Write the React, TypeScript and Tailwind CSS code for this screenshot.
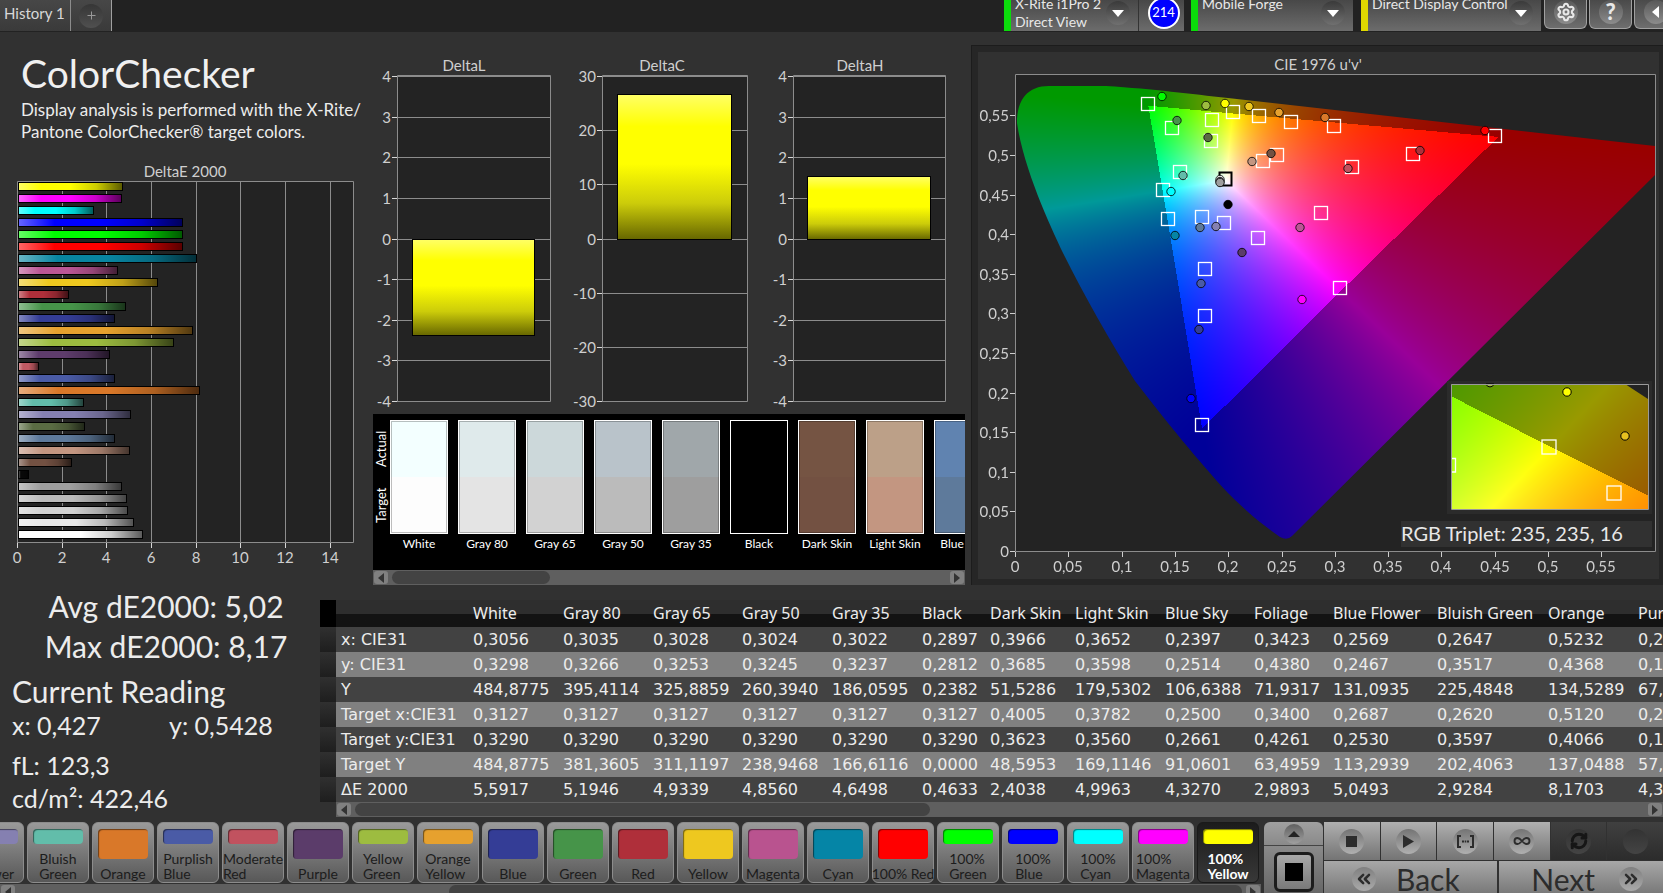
import { useEffect, useRef } from "react";
import type { ReactNode } from "react";
import { ChevronsLeft, ChevronsRight, Infinity as InfinityIcon, RefreshCw, Settings } from "lucide-react";
import clsx from "clsx";

type Patch = { name: string; color: string; dE: number };

// chart order, top to bottom
const deltaE: Patch[] = [
  { name: "100% Yellow", color: "#ffff00", dE: 4.69 },
  { name: "100% Magenta", color: "#ff00ff", dE: 4.64 },
  { name: "100% Cyan", color: "#00ffff", dE: 3.4 },
  { name: "100% Blue", color: "#0000ff", dE: 7.38 },
  { name: "100% Green", color: "#00ff00", dE: 7.38 },
  { name: "100% Red", color: "#ff0000", dE: 7.38 },
  { name: "Cyan", color: "#0885a1", dE: 8.0 },
  { name: "Magenta", color: "#bb5695", dE: 4.47 },
  { name: "Yellow", color: "#eec81f", dE: 6.26 },
  { name: "Red", color: "#af2f3a", dE: 2.23 },
  { name: "Green", color: "#469449", dE: 4.83 },
  { name: "Blue", color: "#343d96", dE: 4.34 },
  { name: "Orange Yellow", color: "#e6a12e", dE: 7.83 },
  { name: "Yellow Green", color: "#9dbc40", dE: 6.98 },
  { name: "Purple", color: "#5e3c6c", dE: 4.12 },
  { name: "Moderate Red", color: "#c15a63", dE: 0.89 },
  { name: "Purplish Blue", color: "#4a5ba6", dE: 4.34 },
  { name: "Orange", color: "#d97829", dE: 8.17 },
  { name: "Bluish Green", color: "#62bdaa", dE: 2.93 },
  { name: "Blue Flower", color: "#8580b1", dE: 5.05 },
  { name: "Foliage", color: "#5a6c43", dE: 2.99 },
  { name: "Blue Sky", color: "#5e7a9b", dE: 4.33 },
  { name: "Light Skin", color: "#c39681", dE: 5.0 },
  { name: "Dark Skin", color: "#735142", dE: 2.4 },
  { name: "Black", color: "#080808", dE: 0.46 },
  { name: "Gray 35", color: "#9e9e9e", dE: 4.65 },
  { name: "Gray 50", color: "#bbbbbb", dE: 4.86 },
  { name: "Gray 65", color: "#d2d2d2", dE: 4.93 },
  { name: "Gray 80", color: "#e8e8e8", dE: 5.19 },
  { name: "White", color: "#ffffff", dE: 5.59 }
];

const swatches = [
  { name: "White", actual: "#f3ffff", target: "#fdfdfd" },
  { name: "Gray 80", actual: "#dfeaeb", target: "#e4e4e4" },
  { name: "Gray 65", actual: "#ccd8da", target: "#d2d2d2" },
  { name: "Gray 50", actual: "#b9c3ca", target: "#bbbbbb" },
  { name: "Gray 35", actual: "#a0a7aa", target: "#9e9e9e" },
  { name: "Black", actual: "#000000", target: "#000000" },
  { name: "Dark Skin", actual: "#755443", target: "#735142" },
  { name: "Light Skin", actual: "#bca088", target: "#c39681" },
  { name: "Blue Sky", actual: "#6083b0", target: "#5e7a9b" }
];

const columns = ["White", "Gray 80", "Gray 65", "Gray 50", "Gray 35", "Black", "Dark Skin", "Light Skin", "Blue Sky", "Foliage", "Blue Flower", "Bluish Green", "Orange", "Purplish Blue"];
const columnWidths = [16, 132, 90, 90, 89, 90, 90, 68, 85, 90, 89, 79, 104, 111, 90, 120];

const rows: [string, string[]][] = [
  ["x: CIE31", ["0,3056", "0,3035", "0,3028", "0,3024", "0,3022", "0,2897", "0,3966", "0,3652", "0,2397", "0,3423", "0,2569", "0,2647", "0,5232", "0,2"]],
  ["y: CIE31", ["0,3298", "0,3266", "0,3253", "0,3245", "0,3237", "0,2812", "0,3685", "0,3598", "0,2514", "0,4380", "0,2467", "0,3517", "0,4368", "0,1"]],
  ["Y", ["484,8775", "395,4114", "325,8859", "260,3940", "186,0595", "0,2382", "51,5286", "179,5302", "106,6388", "71,9317", "131,0935", "225,4848", "134,5289", "67,"]],
  ["Target x:CIE31", ["0,3127", "0,3127", "0,3127", "0,3127", "0,3127", "0,3127", "0,4005", "0,3782", "0,2500", "0,3400", "0,2687", "0,2620", "0,5120", "0,2"]],
  ["Target y:CIE31", ["0,3290", "0,3290", "0,3290", "0,3290", "0,3290", "0,3290", "0,3623", "0,3560", "0,2661", "0,4261", "0,2530", "0,3597", "0,4066", "0,1"]],
  ["Target Y", ["484,8775", "381,3605", "311,1197", "238,9468", "166,6116", "0,0000", "48,5953", "169,1146", "91,0601", "63,4959", "113,2939", "202,4063", "137,0488", "57,"]],
  ["ΔE 2000", ["5,5917", "5,1946", "4,9339", "4,8560", "4,6498", "0,4633", "2,4038", "4,9963", "4,3270", "2,9893", "5,0493", "2,9284", "8,1703", "4,3"]]
];

const patchButtons: { lines: string[]; color: string }[] = [
  { lines: ["Blue", "Flower"], color: "#8580b1" },
  { lines: ["Bluish", "Green"], color: "#62bdaa" },
  { lines: ["Orange"], color: "#d97829" },
  { lines: ["Purplish", "Blue"], color: "#4a5ba6" },
  { lines: ["Moderate", "Red"], color: "#c1525f" },
  { lines: ["Purple"], color: "#5b3c6a" },
  { lines: ["Yellow", "Green"], color: "#9dbc40" },
  { lines: ["Orange", "Yellow"], color: "#e6a12e" },
  { lines: ["Blue"], color: "#343d96" },
  { lines: ["Green"], color: "#469449" },
  { lines: ["Red"], color: "#af2f3a" },
  { lines: ["Yellow"], color: "#eec81f" },
  { lines: ["Magenta"], color: "#b9538f" },
  { lines: ["Cyan"], color: "#0585a6" },
  { lines: ["100% Red"], color: "#ff0000" },
  { lines: ["100%", "Green"], color: "#00ff00" },
  { lines: ["100%", "Blue"], color: "#0000ff" },
  { lines: ["100%", "Cyan"], color: "#00ffff" },
  { lines: ["100%", "Magenta"], color: "#ff00ff" },
  { lines: ["100%", "Yellow"], color: "#ffff00" }
];

// centres inside the 640x476 CIE plot
const targets = [
  [133, 29], [157, 53], [197, 45], [218, 37], [244, 41], [276, 47], [319, 51], [196, 66], [262, 80],
  [248, 86], [337, 92], [398, 79], [480, 61], [165, 97], [148, 115], [153, 144], [187, 142], [209, 148],
  [243, 163], [306, 138], [190, 194], [190, 241], [325, 213], [187, 350]
];

const readings: [number, number, string][] = [
  [147, 21, "#00ff00"], [162, 45, "#469449"], [191, 30, "#9dbc40"], [210, 28, "#ffff00"], [234, 31, "#eec81f"],
  [264, 37, "#e6a12e"], [310, 42, "#d97829"], [193, 62, "#5a6c43"], [237, 86, "#c39681"], [256, 78, "#735142"],
  [333, 93, "#c1525f"], [405, 75, "#af2f3a"], [470, 55, "#ff0000"], [168, 100, "#62bdaa"], [156, 116, "#00ffff"],
  [205, 104, "#f0f0f0"], [205, 106, "#bbbbbb"], [205, 107, "#9e9e9e"], [213, 129, "#000000"], [185, 152, "#5e7a9b"],
  [201, 151, "#8580b1"], [160, 160, "#0585a6"], [227, 177, "#5b3c6a"], [285, 152, "#bb5695"], [186, 208, "#4a5ba6"],
  [287, 224, "#ff00ff"], [184, 254, "#343d96"], [176, 323, "#0000ff"]
];

const LOCUS =
  "M2 48 C2 24 13 11 34 11 L91 11 C140 14 175 19 213 23 L640 71 L640 100 L277 461 Q272 466 265 462 C245 448 230 435 213 418 C185 388 150 345 120 306 C95 266 70 222 48 178 C35 150 9 95 2 48 Z";
const INSET_AREA = "M0 0 L174 0 L197 15 L197 125 L0 125 Z";

type ToXy = (px: number, py: number) => [number, number];

const mainToXy: ToXy = (px, py) => {
  const u = px / 1064.8;
  const v = (476 - py) / 792;
  const d = 6 * u - 16 * v + 12;
  return [(9 * u) / d, (4 * v) / d];
};

const insetToXy: ToXy = (px, py) => [0.4193 + (px - 98) / 2300, 0.5053 - (py - 63) / 1467];

function GamutCanvas({ width, height, toXy, area }: { width: number; height: number; toXy: ToXy; area: string }) {
  const ref = useRef<HTMLCanvasElement>(null);

  useEffect(() => {
    const ctx = ref.current?.getContext("2d");
    if (!ctx) return;
    const image = ctx.createImageData(width, height);
    for (let py = 0; py < height; py++) {
      for (let px = 0; px < width; px++) {
        const [x, y] = toXy(px, py);
        const yy = Math.max(y, 0.0001);
        const X = x / yy;
        const Z = (1 - x - y) / yy;
        const rgb = [
          3.2406 * X - 1.5372 - 0.4986 * Z,
          -0.9689 * X + 1.8758 + 0.0415 * Z,
          0.0557 * X - 0.204 + 1.057 * Z
        ];
        const max = Math.max(...rgb);
        // outside Rec.709 the fill is dimmed
        const gain = Math.min(...rgb) / max < -0.002 ? 0.6 : 1;
        const i = (py * width + px) * 4;
        rgb.forEach((c, k) => {
          image.data[i + k] = 255 * gain * Math.max(0, c / max);
        });
        image.data[i + 3] = 255;
      }
    }
    ctx.putImageData(image, 0, 0);
    ctx.globalCompositeOperation = "destination-in";
    ctx.fill(new Path2D(area));
    ctx.globalCompositeOperation = "source-over";
  }, [width, height, toXy, area]);

  return <canvas ref={ref} width={width} height={height} className="block" />;
}

function DeltaEChart() {
  return (
    <svg viewBox="0 0 373 410" className="mt-4 block h-[410px] w-[373px]" role="img" aria-label="DeltaE 2000">
      <defs>
        <linearGradient id="shade-x">
          <stop offset="0" stopColor="#fff" stopOpacity="0.4" />
          <stop offset="0.22" stopColor="#fff" stopOpacity="0" />
          <stop offset="0.5" stopColor="#000" stopOpacity="0" />
          <stop offset="0.75" stopColor="#000" stopOpacity="0.2" />
          <stop offset="1" stopColor="#000" stopOpacity="0.65" />
        </linearGradient>
      </defs>
      <text x="185" y="18" textAnchor="middle" fontSize="15" fill="#cfcfcf">DeltaE 2000</text>
      <rect x="18" y="23" width="335" height="360" fill="#232323" />
      {[0, 2, 4, 6, 8, 10, 12, 14].map((n) => {
        const x = Math.round(18 + n * 22.33);
        return (
          <g key={n}>
            <rect x={x - 1} y="23" width="1" height="365" fill="#8c8c8c" />
            <rect x={x - 1} y="383" width="1" height="6" fill="#d8d8d8" />
            <text x={x - 1} y="404" textAnchor="middle" fontSize="15" fill="#cfcfcf">{n}</text>
          </g>
        );
      })}
      <path d="M17.5 22.5 H353.5 V383.5 H17.5 Z" fill="none" stroke="#8c8c8c" />
      {deltaE.map((p, i) => (
        <g key={p.name}>
          <rect x="18.5" y={23.5 + i * 12} width={Math.round(p.dE * 22.2)} height="8" fill={p.color} />
          <rect x="18.5" y={23.5 + i * 12} width={Math.round(p.dE * 22.2)} height="8" fill="url(#shade-x)" stroke="#000" />
        </g>
      ))}
    </svg>
  );
}

function DeltaChart({ title, width, left, right, labels, top, bottom, inset }: {
  title: string;
  width: number;
  left: number;
  right: number;
  labels: number[];
  top: number;
  bottom: number;
  inset: number;
}) {
  const step = 325 / (labels.length - 1);
  return (
    <svg width={width} height="382" viewBox={`0 0 ${width} 382`} className="block shrink-0" role="img" aria-label={title}>
      <defs>
        <linearGradient id={`shade-${title}`} x1="0" y1="0" x2="0" y2="1">
          <stop offset="0" stopColor="#ffff66" />
          <stop offset="0.22" stopColor="#ffff00" />
          <stop offset="0.48" stopColor="#ffff00" />
          <stop offset="0.75" stopColor="#cccc0a" />
          <stop offset="1" stopColor="#666600" />
        </linearGradient>
      </defs>
      <text x="91" y="39" textAnchor="middle" fontSize="15" fill="#cfcfcf">{title}</text>
      <rect x={left} y="44" width={right - left} height="325" fill="#232323" />
      {labels.map((n, i) => {
        const y = Math.round(44 + i * step);
        return (
          <g key={n}>
            <rect x={left} y={y} width={right - left} height="1" fill="#8c8c8c" />
            <rect x={left - 5} y={y} width="5" height="1" fill="#d8d8d8" />
            <text x={left - 6} y={y + 6} textAnchor="end" fontSize="15" fill="#cfcfcf">{n}</text>
          </g>
        );
      })}
      <path d={`M${left + 0.5} 43.5 H${right + 0.5} V369.5 H${left + 0.5} Z`} fill="none" stroke="#8c8c8c" />
      <rect x={left + inset + 0.5} y={top + 0.5} width={right - left - inset * 2 - 1} height={bottom - top} fill={`url(#shade-${title})`} stroke="#000" />
    </svg>
  );
}

function CieChart() {
  return (
    <svg viewBox="0 0 681 527" className="block w-full bg-[#313131]" role="img" aria-label="CIE 1976 u'v'">
      <text x="340" y="18" textAnchor="middle" fontSize="15" fill="#cfcfcf">CIE 1976 u'v'</text>
      <g transform="translate(37 23)">
        <rect y="-1" width="640" height="477" fill="#232323" />
        <foreignObject x="0" y="0" width="640" height="476">
          <GamutCanvas width={640} height={476} toXy={mainToXy} area={LOCUS} />
        </foreignObject>
        <path d="M0.5 -0.5 H640.5 V476.5 H0.5 Z" fill="none" stroke="#8c8c8c" />
        {["0", "0,05", "0,1", "0,15", "0,2", "0,25", "0,3", "0,35", "0,4", "0,45", "0,5", "0,55"].map((label, i) => {
          const x = Math.round(i * 53.3);
          const y = Math.round(476 - i * 39.6);
          return (
            <g key={label} fill="#cfcfcf" fontSize="15">
              <rect x={x} y="477" width="1" height="5" />
              <text x={x} y="497" textAnchor="middle">{label}</text>
              <rect x="-5" y={y} width="5" height="1" />
              <text x="-6" y={y + 6} textAnchor="end">{label}</text>
            </g>
          );
        })}
        {targets.map(([x, y]) => (
          <rect key={`${x}-${y}`} x={x - 6.5} y={y - 6.5} width="13" height="13" fill="none" stroke="#fff" strokeWidth="1.3" />
        ))}
        <rect x="204.5" y="97.5" width="12" height="13" fill="none" stroke="#000" strokeWidth="2" />
        {readings.map(([x, y, color]) => (
          <circle key={`${x}-${y}`} cx={x} cy={y + 0.5} r="4.2" fill={color} stroke="#000" strokeOpacity="0.8" />
        ))}

        <rect x="432" y="306" width="205" height="133" fill="#2b2b2b" />
        <g transform="translate(436 309)">
          <rect width="198" height="126" fill="#232323" />
          <foreignObject x="0" y="0" width="197" height="125">
            <GamutCanvas width={197} height={125} toXy={insetToXy} area={INSET_AREA} />
          </foreignObject>
          <g fill="none" stroke="#fff" strokeWidth="1.3">
            <rect x="91" y="56" width="14" height="14" />
            <rect x="156" y="102" width="14" height="14" />
            <path d="M0 74.5 H4.5 V88 H0" />
          </g>
          <path d="M35 0 A4.2 4.2 0 0 0 43 0 Z" fill="#9dbc40" stroke="#000" />
          <circle cx="116" cy="8" r="4.2" fill="#ffff00" stroke="#000" />
          <circle cx="174" cy="52" r="4.2" fill="#e6c020" stroke="#000" />
          <path d="M0.5 0.5 H197.5 V125.5 H0.5 Z" fill="none" stroke="#9a9a9a" />
        </g>
        <rect x="386" y="446" width="251" height="26" fill="#313131" />
        <text x="386" y="466" fontSize="20" fill="#e8e8e8">RGB Triplet: 235, 235, 16</text>
      </g>
    </svg>
  );
}

function ScrollBar({ lead, thumb, label }: { lead: string; thumb: string; label: string }) {
  return (
    <div className="flex h-[15px] w-full items-center justify-between bg-[#5f5f5f] px-px">
      <button aria-label={`Scroll ${label} left`} className="flex h-[13px] w-[14px] shrink-0 items-center justify-center rounded-[3px] bg-[#808080]">
        <svg width="6" height="10" viewBox="0 0 6 10"><path d="M6 0 L0 5 L6 10 Z" fill="#333" /></svg>
      </button>
      <div className="flex flex-1 px-1">
        <div className={lead} />
        <div className={clsx("h-[13px] rounded-full bg-[#434343]", thumb)} />
      </div>
      <button aria-label={`Scroll ${label} right`} className="flex h-[13px] w-[14px] shrink-0 items-center justify-center rounded-[3px] bg-[#808080]">
        <svg width="6" height="10" viewBox="0 0 6 10"><path d="M0 0 L6 5 L0 10 Z" fill="#333" /></svg>
      </button>
    </div>
  );
}

function DeviceMenu({ lines, bar, className }: { lines: string[]; bar: string; className: string }) {
  return (
    <button className={clsx("flex h-[31px] items-end overflow-hidden bg-linear-to-b from-[#484848] to-[#6c6c6c] text-left", className)}>
      <span className={clsx("h-full w-[7px] shrink-0", bar)} />
      <span className="flex-1 pl-1 text-[14px] leading-[18px] whitespace-nowrap text-[#e8e8e8]">
        <span className="block h-[18px]">{lines[0]}</span>
        <span className="block h-[18px]">{lines[1]}</span>
      </span>
      <span className="mr-2 mb-[6px] flex size-6 shrink-0 items-center justify-center rounded-full bg-linear-to-b from-[#3a3a3a] to-[#707070]">
        <svg width="12" height="7" viewBox="0 0 12 7"><path d="M0 0 H12 L6 7 Z" fill="#fff" /></svg>
      </span>
    </button>
  );
}

function ToolButton({ label, children }: { label: string; children: ReactNode }) {
  return (
    <button aria-label={label} className="flex h-[29px] w-[43px] items-start justify-center rounded-b-md border border-t-0 border-[#a0a0a0] bg-linear-to-b from-[#4a4a4a] to-[#6e6e6e]">
      <span className="flex size-6 items-center justify-center rounded-full bg-linear-to-b from-[#585858] to-[#8c8c8c] text-[#e8e8e8]">{children}</span>
    </button>
  );
}

function Header() {
  return (
    <header className="flex h-8 items-start justify-between overflow-hidden bg-[#222]">
      <div className="flex h-[31px]">
        <button className="w-[71px] border-r border-[#8c8c8c] bg-linear-to-b from-[#474747] to-[#3a3a3a] pb-1 pl-1 text-left text-[15px] whitespace-nowrap text-[#d8d8d8]">History 1</button>
        <button aria-label="Add history tab" className="flex w-[41px] items-center justify-center border-r border-[#a0a0a0] bg-linear-to-b from-[#474747] to-[#3a3a3a]">
          <span className="flex size-6 items-center justify-center rounded-full bg-linear-to-b from-[#363636] to-[#505050]">
            <svg width="9" height="9" viewBox="0 0 9 9"><path d="M4.5 0.5 V8.5 M0.5 4.5 H8.5" stroke="#999" /></svg>
          </span>
        </button>
      </div>
      <div className="flex">
        <DeviceMenu lines={["X-Rite i1Pro 2", "Direct View"]} bar="bg-[#0bdc0b]" className="w-[134px]" />
        <div className="mr-[7px] flex h-[31px] w-[46px] items-start justify-center border-l border-[#333] bg-linear-to-b from-[#484848] to-[#6c6c6c] pl-1">
          <span className="-mt-[3px] flex size-8 items-center justify-center rounded-full border-2 border-white bg-[#0000ff] text-[13px] text-white">214</span>
        </div>
        <DeviceMenu lines={["Mobile Forge", ""]} bar="bg-[#0bdc0b]" className="mr-2 w-[162px]" />
        <DeviceMenu lines={["Direct Display Control", ""]} bar="bg-[#e0d800]" className="mr-[3px] w-[180px]" />
        <div className="-mr-[14px] flex gap-[2px]">
          <ToolButton label="Settings"><Settings size={20} strokeWidth={2.5} /></ToolButton>
          <ToolButton label="Help"><span className="text-[22px] leading-6 font-black">?</span></ToolButton>
          <ToolButton label="Collapse">
            <svg width="7" height="12" viewBox="0 0 7 12"><path d="M7 0 L0 6 L7 12 Z" fill="#fff" /></svg>
          </ToolButton>
        </div>
      </div>
    </header>
  );
}

function SwatchStrip() {
  return (
    <div className="overflow-hidden bg-black">
      <div className="flex h-[156px] pt-[6px]">
        <div className="flex h-[114px] w-[17px] shrink-0 flex-col items-center text-[13px] leading-[17px] text-white">
          <span className="flex flex-1 rotate-180 items-center justify-center [writing-mode:vertical-rl]">Actual</span>
          <span className="flex flex-1 rotate-180 items-center justify-center [writing-mode:vertical-rl]">Target</span>
        </div>
        <div className="flex gap-[10px]">
          {swatches.map((s) => (
            <div key={s.name} className="w-[58px] shrink-0">
              <div className="h-[114px] border border-white">
                <div className="h-1/2 border border-b-0 border-black/25" style={{ backgroundColor: s.actual }} />
                <div className="h-1/2 border border-t-0 border-black/25" style={{ backgroundColor: s.target }} />
              </div>
              <p className="mt-[2px] text-center text-[12px] leading-4 whitespace-nowrap text-white">{s.name}</p>
            </div>
          ))}
        </div>
      </div>
      <ScrollBar label="swatches" lead="w-0" thumb="w-[158px]" />
    </div>
  );
}

function Readout() {
  return (
    <section className="w-[320px] shrink-0 pl-3 text-[30px] leading-10 text-[#ececec]">
      <p className="text-center">Avg dE2000: 5,02</p>
      <p className="text-center">Max dE2000: 8,17</p>
      <h2 className="mt-[5px]">Current Reading</h2>
      <div className="text-[25px] leading-7">
        <p className="flex"><span className="w-[157px]">x: 0,427</span><span>y: 0,5428</span></p>
        <p className="mt-3">fL: 123,3</p>
        <p className="mt-[5px]">cd/m²: 422,46</p>
      </div>
    </section>
  );
}

function DataTable() {
  return (
    <section className="mt-[14px] min-w-0 flex-1 overflow-hidden">
      <table className="w-[1433px] table-fixed border-collapse text-left text-[16px] whitespace-nowrap text-[#ececec]">
        <colgroup>
          {columnWidths.map((w, i) => <col key={i} style={{ width: w }} />)}
        </colgroup>
        <thead>
          <tr className="h-[27px] bg-linear-to-b from-[#2e2e2e] from-50% to-[#131313] to-50% font-['Noto_Sans',sans-serif]">
            <td className="bg-black" />
            <td />
            {columns.map((c) => <th key={c} scope="col" className="p-0 pb-[2px] pl-[5px] leading-5 font-normal">{c}</th>)}
          </tr>
        </thead>
        <tbody className="font-['DejaVu_Sans',sans-serif]">
          {rows.map(([label, values], i) => (
            <tr key={label} className={clsx("h-[25px]", i % 2 ? "bg-[#808080]" : "bg-[#424242]")}>
              <td className="bg-linear-to-b from-[#303030] to-[#1e1e1e]" />
              <th scope="row" className="p-0 pl-[5px] leading-5 font-normal">{label}</th>
              {values.map((v, k) => <td key={k} className="p-0 pl-[5px] leading-5">{v}</td>)}
            </tr>
          ))}
        </tbody>
      </table>
      <div className="pl-4">
        <ScrollBar label="table" lead="w-0" thumb="w-[575px]" />
      </div>
    </section>
  );
}

function PatchButton({ lines, color, active }: { lines: string[]; color: string; active: boolean }) {
  return (
    <button
      className={clsx(
        "flex h-[61px] w-[62px] shrink-0 flex-col items-center rounded-md border pt-[6px] text-[14px] leading-[15px]",
        active ? "border-[#1a1a1a] bg-linear-to-b from-[#1c1c1c] to-[#383838] font-bold text-white" : "border-[#8c8c8c] bg-linear-to-b from-[#9a9a9a] to-[#585858] text-[#1c1c1c]"
      )}
    >
      <span
        className={clsx("w-[50px] shrink-0 rounded-[4px] shadow-[inset_1px_1px_1px_rgba(0,0,0,0.5)]", lines.length > 1 ? "h-[15px]" : "h-[30px]")}
        style={{ backgroundColor: color }}
      />
      <span className="mt-[7px] text-left whitespace-nowrap">
        {lines.map((l) => <span key={l} className="block">{l}</span>)}
      </span>
    </button>
  );
}

function Transport({ label, dim, children }: { label: string; dim?: boolean; children?: ReactNode }) {
  return (
    <button aria-label={label} className={clsx("flex h-[38px] flex-1 items-center justify-center bg-linear-to-b", dim ? "from-[#404040] to-[#2c2c2c]" : "from-[#b0b0b0] to-[#747474]")}>
      <span className={clsx("flex size-[25px] items-center justify-center rounded-full bg-linear-to-b text-[#2c2c2c]", dim ? "from-[#333] to-[#444]" : "from-[#747474] to-[#b0b0b0]")}>{children}</span>
    </button>
  );
}

function Footer() {
  return (
    <footer className="flex h-[75px] overflow-hidden pt-1">
      <div className="min-w-0 flex-1">
        <div className="flex justify-end gap-[3px] overflow-hidden pr-[2px]">
          {patchButtons.map((p, i) => <PatchButton key={p.lines.join(" ")} {...p} active={i === patchButtons.length - 1} />)}
        </div>
        <div className="mt-px">
          <ScrollBar label="patches" lead="w-[430px]" thumb="flex-1" />
        </div>
      </div>
      <div className="ml-[3px] w-[59px] shrink-0">
        <button aria-label="Show patch list" className="flex h-6 w-full items-center justify-center rounded-t-md border-b border-[#444] bg-linear-to-b from-[#a0a0a0] to-[#8a8a8a]">
          <span className="flex size-5 items-center justify-center rounded-full bg-linear-to-b from-[#606060] to-[#a0a0a0]">
            <svg width="12" height="6" viewBox="0 0 12 6"><path d="M6 0 L12 6 H0 Z" fill="#222" /></svg>
          </span>
        </button>
        <div className="flex h-12 items-start justify-center bg-linear-to-b from-[#8a8a8a] to-[#666] pt-[6px]">
          <button aria-label="Single patch view" className="flex size-10 items-center justify-center rounded-md border-[3px] border-[#1c1c1c] bg-linear-to-b from-[#a8a8a8] to-[#7a7a7a]">
            <span className="size-[18px] bg-black" />
          </button>
        </div>
      </div>
      <div className="ml-px w-[339px] shrink-0">
        <div className="flex gap-px">
          <Transport label="Stop"><span className="size-[11px] bg-[#2c2c2c]" /></Transport>
          <Transport label="Play"><svg width="11" height="13" viewBox="0 0 11 13"><path d="M0 0 L11 6.5 L0 13 Z" fill="#2c2c2c" /></svg></Transport>
          <Transport label="Read series">
            <svg width="17" height="13" viewBox="0 0 17 13" fill="none" stroke="#2c2c2c" strokeWidth="2"><path d="M4 1 H1 V12 H4 M13 1 H16 V12 H13 M5 6.5 H7 M7.7 6.5 H9.3 M10 6.5 H12" /></svg>
          </Transport>
          <Transport label="Read continuously"><InfinityIcon size={18} strokeWidth={2.5} /></Transport>
          <Transport label="Refresh" dim><RefreshCw size={18} strokeWidth={4} color="#161616" /></Transport>
          <Transport label="Record" dim />
        </div>
        <div className="mt-px flex gap-[2px] text-[30px] leading-9 text-[#2c2c2c]">
          <button className="flex h-9 flex-1 items-center gap-5 bg-linear-to-b from-[#a8a8a8] to-[#747474] pl-7">
            <span className="flex size-6 items-center justify-center rounded-full bg-linear-to-b from-[#808080] to-[#aaa]"><ChevronsLeft size={20} strokeWidth={3} /></span>
            Back
          </button>
          <button className="flex h-9 flex-1 items-center justify-end gap-6 bg-linear-to-b from-[#a8a8a8] to-[#747474] pr-5">
            Next
            <span className="flex size-6 items-center justify-center rounded-full bg-linear-to-b from-[#808080] to-[#aaa]"><ChevronsRight size={20} strokeWidth={3} /></span>
          </button>
        </div>
      </div>
    </footer>
  );
}

export default function App() {
  return (
    <div className="flex flex-col overflow-hidden bg-[#313131] font-[Lato,'Liberation_Sans',sans-serif]">
      <Header />
      <main className="flex flex-col">
        <div className="flex h-[554px]">
          <section className="w-[373px] shrink-0 pt-[19px]">
            <div className="pl-[21px]">
              <h1 className="text-[39px] leading-[44px] text-[#f0f0f0]">ColorChecker</h1>
              <p className="mt-1 text-[17px] leading-[22px] whitespace-nowrap text-[#ececec]">
                Display analysis is performed with the X-Rite/<br />
                Pantone ColorChecker® target colors.
              </p>
            </div>
            <DeltaEChart />
          </section>
          <section className="w-[592px] shrink-0">
            <div className="flex">
              <DeltaChart title="DeltaL" width={198} left={24} right={177} labels={[4, 3, 2, 1, 0, -1, -2, -3, -4]} top={207} bottom={303} inset={15} />
              <DeltaChart title="DeltaC" width={198} left={31} right={176} labels={[30, 20, 10, 0, -10, -20, -30]} top={62} bottom={207} inset={15} />
              <DeltaChart title="DeltaH" width={196} left={24} right={176} labels={[4, 3, 2, 1, 0, -1, -2, -3, -4]} top={144} bottom={207} inset={14} />
            </div>
            <SwatchStrip />
          </section>
          <section className="mt-[13px] ml-[6px] min-w-0 flex-1 self-start border-t border-l border-[#1c1c1c] bg-[#262626] pt-[6px] pr-1 pb-[6px] pl-[6px]">
            <CieChart />
          </section>
        </div>
        <div className="flex h-[232px]">
          <Readout />
          <DataTable />
        </div>
      </main>
      <Footer />
    </div>
  );
}
